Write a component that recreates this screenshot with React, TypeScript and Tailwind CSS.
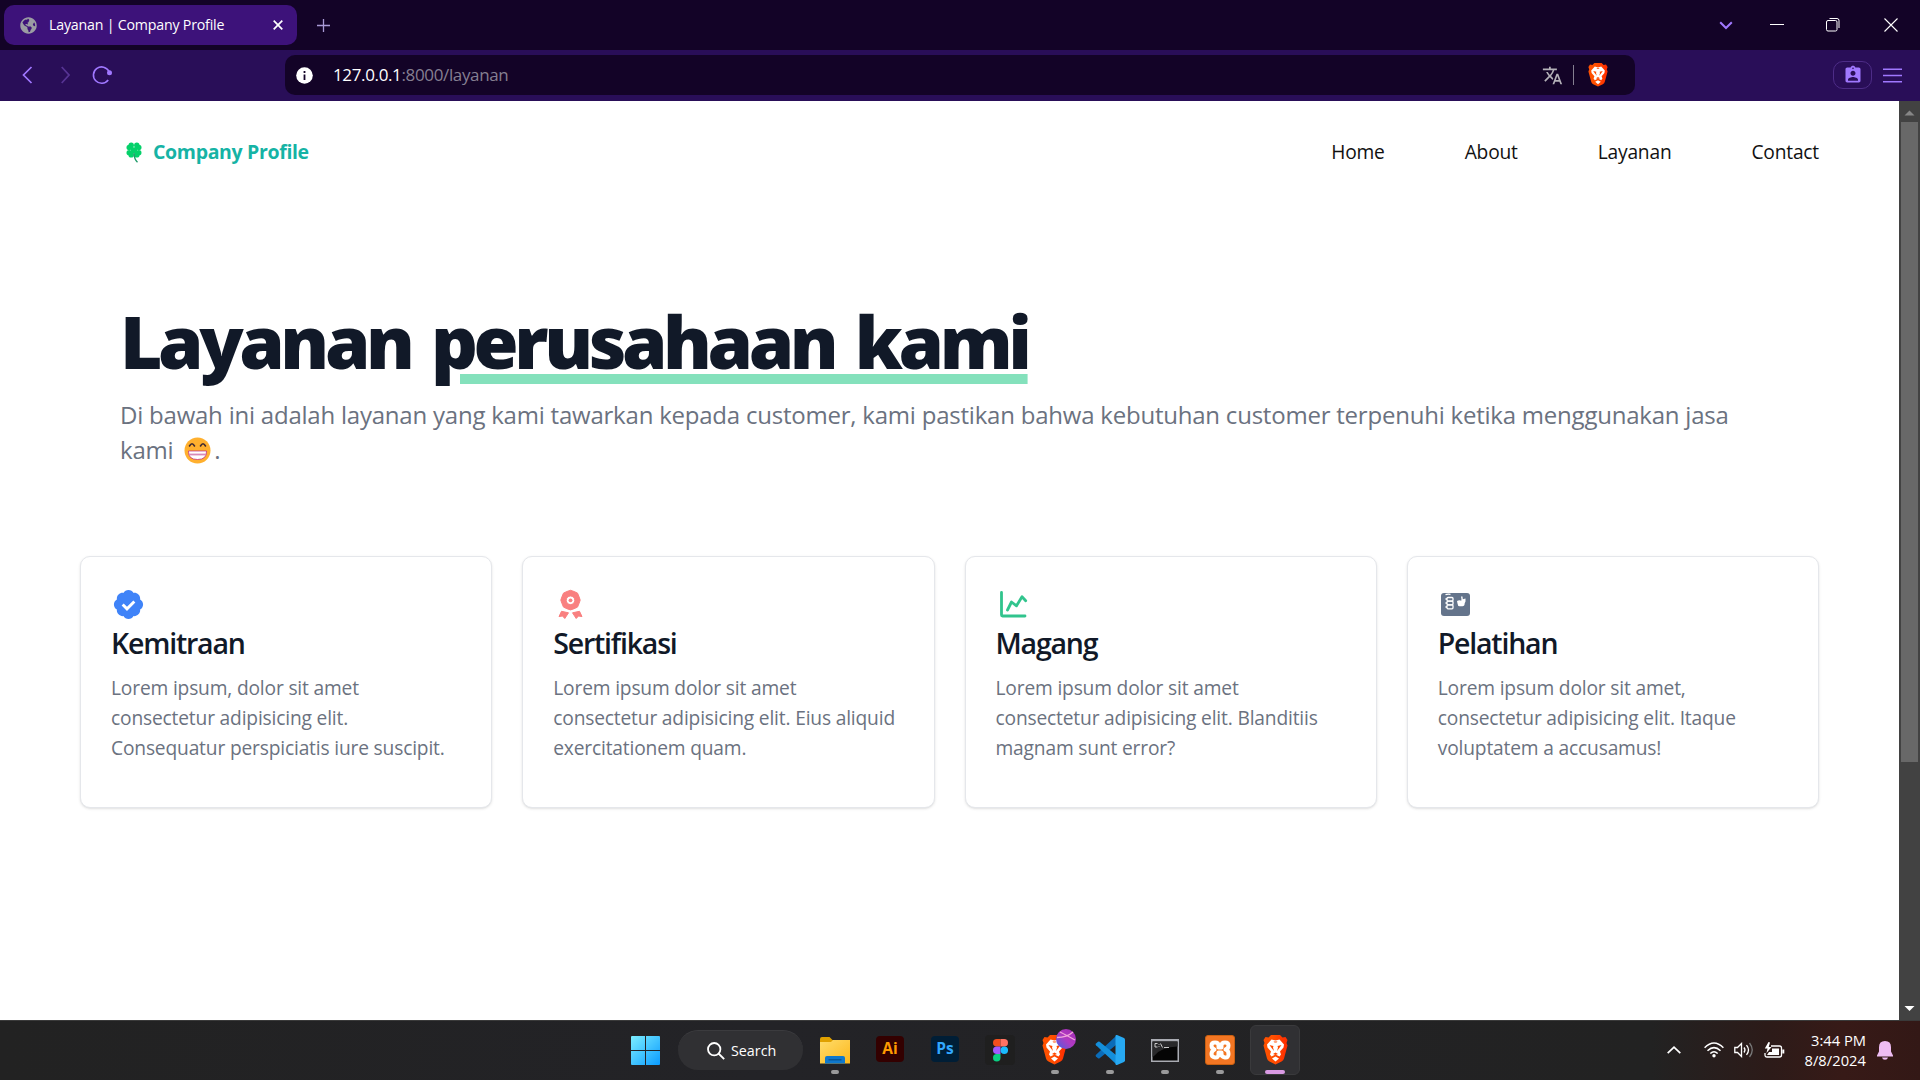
import React from 'react';
import { MdTranslate, MdAssignmentInd } from 'react-icons/md';
import { BiSolidBadgeCheck } from 'react-icons/bi';
import { FaGlobeAmericas } from 'react-icons/fa';

function BraveIcon({ w, id }: { w: number; id: string }) {
  return (
    <svg width={w} height={w * 1.18} viewBox="0 0 50 59">
      <defs>
        <linearGradient id={id} x1="0" x2="1" y1="0" y2="0">
          <stop offset="0.4" stopColor="#ff5000" />
          <stop offset="1" stopColor="#ff2a00" />
        </linearGradient>
      </defs>
      <path fill={`url(#${id})`} d="M16 0h18l5 5 6-1 4 6-2 6 2 5-7 26q-1 4-5 6L25 59 13 53q-4-2-5-6L1 21l2-5-2-6 4-6 6 1z" />
      <path fill="#fff" d="M25 11l8-2 9 10-1 6-7 8 2 6-3 4-8-4-8 4-3-4 2-6-7-8-1-6 9-10z M25 43l7 4-7 6-7-6z" />
      <path fill="#ff4a00" d="M13 20l8 2-1 3 2 7-4-5zM37 20l-8 2 1 3-2 7 4-5zM21 13h8l-2 2h-4zM20 38l5-3 5 3-5 2z" />
    </svg>
  );
}

function Clover() {
  return (
    <svg width="16" height="21" viewBox="0 0 16 21">
      <g fill="#05d16a">
        <circle cx="5.200" cy="3.200" r="2.700" /><circle cx="10.800" cy="3.200" r="2.700" />
        <circle cx="3.200" cy="5.400" r="2.700" /><circle cx="12.800" cy="5.400" r="2.700" />
        <circle cx="3.200" cy="10.800" r="2.700" /><circle cx="12.800" cy="10.800" r="2.700" />
        <circle cx="5.200" cy="12.900" r="2.700" /><circle cx="10.800" cy="12.900" r="2.700" />
        <path d="M3.500 3.500l4.500 2 4.500-2L11 8l1.500 4.800L8 11l-4.500 1.800L5 8z" />
      </g>
      <path d="M8 11q0 6 3.500 9.300" fill="none" stroke="#1c9a68" strokeWidth="1.300" />
    </svg>
  );
}

function AwardIcon() {
  return (
    <svg width="35" height="35" viewBox="0 0 35 35" fill="#f98080">
      <path fillRule="evenodd" stroke="#f98080" strokeLinejoin="round" d="M17.500 3.300l3.600 1.200 3.400 1.600 1.500 3.500 1.200 3.500-1.200 3.500-1.500 3.500-3.400 1.600-3.600 1.200-3.600-1.200-3.400-1.600-1.500-3.500-1.200-3.500 1.200-3.500 1.500-3.500 3.400-1.600zM17.500 9a4.300 4.300 0 1 0 0 8.600 4.300 4.300 0 0 0 0-8.600z" />
      <circle cx="17.500" cy="13.300" r="1.900" />
      <path stroke="#f98080" strokeLinejoin="round" d="M8.500 24.300l7 1.500-3.700 5.700-2.300-2.500-3.500.6zM26.500 24.300l-7 1.500 3.700 5.700 2.300-2.500 3.500.6z" />
    </svg>
  );
}

function ChartIcon() {
  return (
    <svg width="35" height="35" viewBox="0 0 35 35" fill="none" stroke="#31c48d" strokeWidth="2.800" strokeLinecap="round" strokeLinejoin="round">
      <path d="M5.500 5.500v22.500q0 1 1 1h22.500" />
      <path d="M11.500 23l4-8 5 3.800 5.500-9 3.700 4" />
    </svg>
  );
}

function NotesIcon() {
  return (
    <svg width="35" height="35" viewBox="0 0 35 35">
      <rect x="3" y="6" width="29" height="23" rx="3" fill="#64748b" />
      <g fill="none" stroke="#fff" strokeWidth="1.300">
        <path d="M7.500 7.700q2-1 5-.4" />
        <rect x="9" y="10.500" width="6" height="3.600" rx="1" />
        <rect x="9" y="14.100" width="6" height="3.700" rx="1" />
        <rect x="9" y="17.800" width="6" height="4" rx="1" />
        <path d="M8.200 11v2M8.200 15v2M8.200 19v2" />
      </g>
      <path fill="#fff" d="M19 14q2.500-1.600 4.300-.2.500-1-.3-4.300h1.500l.3 2.700 2.700-.7v3l-.8 1.700q0 3-2.300 3h-2.700q-2 0-2.200-2.700z" />
    </svg>
  );
}

function Grin() {
  return (
    <svg width="27" height="27" viewBox="0 0 27 27" className="mr-[3px] ml-[5px] inline-block align-[-5px]" role="img" aria-label="grin">
      <circle cx="13.500" cy="13.500" r="13" fill="#ffb02e" />
      <path d="M5.500 9q2.500-4.500 5 0M16.500 9q2.500-4.500 5 0" fill="none" stroke="#402a32" strokeWidth="1.600" strokeLinecap="round" />
      <path d="M4.500 14h18q.5 8.500-9 8.500T4.500 14z" fill="#fff" stroke="#bb1d80" strokeWidth=".7" />
      <path d="M5 17.500h17" stroke="#d889b8" strokeWidth="1.800" />
    </svg>
  );
}

const cards = [
  { title: 'Kemitraan', lines: ['Lorem ipsum, dolor sit amet', 'consectetur adipisicing elit.', 'Consequatur perspiciatis iure suscipit.'], icon: <BiSolidBadgeCheck size={35} color="#3f83f8" /> },
  { title: 'Sertifikasi', lines: ['Lorem ipsum dolor sit amet', 'consectetur adipisicing elit. Eius aliquid', 'exercitationem quam.'], icon: <AwardIcon /> },
  { title: 'Magang', lines: ['Lorem ipsum dolor sit amet', 'consectetur adipisicing elit. Blanditiis', 'magnam sunt error?'], icon: <ChartIcon /> },
  { title: 'Pelatihan', lines: ['Lorem ipsum dolor sit amet,', 'consectetur adipisicing elit. Itaque', 'voluptatem a accusamus!'], icon: <NotesIcon /> },
];

function BrowserChrome() {
  return (
    <header className="text-white">
      <div className="flex h-[50px] items-center bg-[#130327]">
        <div className="ml-1 flex h-10 w-[293px] items-center rounded-[10px] bg-[#3d127a] pr-[14px] pl-4">
          <FaGlobeAmericas size={17} color="#9b9da3" />
          <span className="ml-3 text-[14.200px] tracking-[-0.200px] whitespace-nowrap">Layanan | Company Profile</span>
          <svg className="ml-auto" width="10" height="10" viewBox="0 0 10 10" stroke="#fff" strokeWidth="1.700"><path d="M.7.7l8.600 8.600M9.300.7L.7 9.300" /></svg>
        </div>
        <svg className="ml-5" width="13" height="13" viewBox="0 0 13 13" stroke="#a99ad6" strokeWidth="1.300"><path d="M6.500 0v13M0 6.500h13" /></svg>
        <div className="ml-auto flex items-center">
          <svg width="14" height="9" viewBox="0 0 14 9" fill="none" stroke="#a078ff" strokeWidth="2"><path d="M1.200 1.200L7 7l5.800-5.800" /></svg>
          <svg className="ml-[37px]" width="14" height="2" viewBox="0 0 14 2"><path d="M0 .5h14" stroke="#fff" /></svg>
          <svg className="ml-[42px]" width="14" height="14" viewBox="0 0 14 14" fill="none" stroke="#fff"><rect x=".5" y="2.500" width="10.500" height="10.500" rx="1.500" /><path d="M3.500.5h7.500q2 0 2 2v7.500" /></svg>
          <svg className="mr-[22px] ml-[44px]" width="14" height="14" viewBox="0 0 14 14" stroke="#fff" strokeWidth="1.100"><path d="M.5.5l13 13M13.500.5l-13 13" /></svg>
        </div>
      </div>
      <div className="flex h-[51px] items-center bg-[#290e58] pb-px">
        <svg className="ml-[22px]" width="11" height="18" viewBox="0 0 11 18" fill="none" stroke="#a078ff" strokeWidth="1.700"><path d="M9.500 1L1.500 9l8 8" /></svg>
        <svg className="ml-[28px]" width="9" height="18" viewBox="0 0 9 18" fill="none" stroke="#573494" strokeWidth="1.700"><path d="M.7 1L8 9 .7 17" /></svg>
        <svg className="ml-[22px]" width="20" height="20" viewBox="0 0 20 20"><path d="M17 6.500A8.200 8.200 0 1 0 16.200 15" fill="none" stroke="#a078ff" strokeWidth="1.600" /><circle cx="17.500" cy="7.800" r="2.500" fill="#a078ff" /></svg>
        <div className="ml-[173px] flex h-10 w-[1350px] items-center rounded-[10px] bg-[#130327] pr-[27px] pl-[11px]">
          <svg width="17" height="17" viewBox="0 0 17 17"><circle cx="8.500" cy="8.500" r="8.300" fill="#fff" /><path d="M8.500 4v2M8.500 7.500v5.500" stroke="#130327" strokeWidth="1.800" /></svg>
          <span className="ml-5 text-[17px] tracking-[-0.360px] text-[#857f91]"><span className="text-white">127.0.0.1</span>:8000/layanan</span>
          <MdTranslate className="ml-auto" size={21} color="#b4b1b8" />
          <div className="mx-[10px] h-5 w-px bg-[#857f91]" />
          <div className="ml-[4px]"><BraveIcon w={20} id="bar-brave" /></div>
        </div>
        <div className="ml-auto flex h-7 w-[39px] items-center justify-center rounded-[10px] border border-[#4d2c87]"><MdAssignmentInd size={20} color="#a078ff" /></div>
        <svg className="mr-[18px] ml-[11px]" width="19" height="15" viewBox="0 0 19 15" stroke="#a078ff" strokeWidth="1.400"><path d="M0 1.200h19M0 7.500h19M0 13.800h19" /></svg>
      </div>
    </header>
  );
}

function Page() {
  return (
    <main className="flex-1 overflow-hidden bg-white pr-[80px] pl-20">
      <nav className="flex h-[102px] items-center pl-[46px]">
        <div className="flex items-center">
          <Clover />
          <span className="ml-[11px] text-[19.500px] font-bold tracking-[-0.340px] text-[#16b3a5]">Company Profile</span>
        </div>
        <div className="ml-auto flex gap-20 text-[19.200px] tracking-[-0.200px] text-[#111]">
          <span>Home</span><span>About</span><span>Layanan</span><span>Contact</span>
        </div>
      </nav>
      <section className="mt-[100px] pl-10">
        <h1 className="text-[73px] leading-[75px] font-extrabold tracking-[-4.400px] [word-spacing:6px] whitespace-nowrap text-[#111928]">
          Layanan <span className="underline decoration-[#84e1bc] decoration-[10px] underline-offset-[5px]">perusahaan kami</span>
        </h1>
        <p className="mt-[19px] text-[24px] leading-[35px] tracking-[-0.220px] text-[#6b7280]">
          <span className="whitespace-nowrap">Di bawah ini adalah layanan yang kami tawarkan kepada customer, kami pastikan bahwa kebutuhan customer terpenuhi ketika menggunakan jasa</span><br />
          <span>kami <Grin />.</span>
        </p>
      </section>
      <section className="mt-[89px] grid grid-cols-4 gap-[30px]">
        {cards.map((c) => (
          <article key={c.title} className="h-[252px] rounded-[10px] border border-gray-200 bg-white p-[30px] shadow-sm">
            {c.icon}
            <h5 className="mt-px text-[28.500px] leading-10 font-semibold tracking-[-1.200px] text-[#111928]">{c.title}</h5>
            <p className="mt-[10px] text-[19.200px] leading-[30px] tracking-[-0.170px] whitespace-nowrap text-[#6b7280]">
              {c.lines.map((l) => <span key={l} className="block">{l}</span>)}
            </p>
          </article>
        ))}
      </section>
    </main>
  );
}

function Scrollbar() {
  return (
    <aside className="flex w-[21px] flex-col items-center bg-[#424242]">
      <svg width="21" height="21" viewBox="0 0 21 21"><path d="M5.500 14.500l5-5 5 5z" fill="#868686" /></svg>
      <div className="h-[640px] w-[17px] bg-[#686868]" />
      <svg className="mt-auto" width="21" height="21" viewBox="0 0 21 21"><path d="M5.500 7l5 5 5-5z" fill="#fff" /></svg>
    </aside>
  );
}

function AppTile({ children, running, active }: { children: React.ReactNode; running?: boolean; active?: boolean }) {
  return (
    <div className={active ? 'relative mx-[2.500px] flex h-[50px] w-[50px] items-center justify-center rounded-md border border-[#3a3a3c] bg-[#303033]' : 'relative flex h-[50px] w-[55px] items-center justify-center'}>
      {children}
      {running && <i className="absolute bottom-[1px] h-1 w-2 rounded-full bg-[#9a9a9b]" />}
      {active && <i className="absolute bottom-0 h-1 w-5 rounded-full bg-[#d99ae3]" />}
    </div>
  );
}

function Taskbar() {
  return (
    <footer className="flex h-[60px] items-center border-t border-[#3a3a3a] bg-[linear-gradient(90deg,#222_0%,#232327_40%,#222_86%,#2c1b19_92%,#371a17_96%,#331816_100%)] pb-px text-white">
      <div className="ml-[617.500px] flex items-center">
        <AppTile>
          <svg width="29" height="29" viewBox="0 0 29 29">
            <defs><linearGradient id="win" gradientUnits="userSpaceOnUse" x1="0" y1="0" x2="29" y2="29"><stop stopColor="#7ceeff" /><stop offset="1" stopColor="#0a9bff" /></linearGradient></defs>
            <path fill="url(#win)" d="M1 0h13v14H0V1q0-1 1-1zM15 0h13q1 0 1 1v13H15zM0 15h14v14H1q-1 0-1-1zM15 15h14v13q0 1-1 1H15z" />
          </svg>
        </AppTile>
        <div className="mr-[4.500px] ml-[5.500px] flex h-10 w-[125px] items-center rounded-full border-t border-[#3b3b3e] bg-[#303033] pl-[29px]">
          <svg width="18" height="18" viewBox="0 0 18 18" fill="none" stroke="#fff" strokeWidth="1.800"><circle cx="7.200" cy="7.200" r="6.200" /><path d="M11.500 11.500l5.700 5.700" /></svg>
          <span className="ml-[6px] text-[14.300px]">Search</span>
        </div>
        <AppTile running>
          <svg width="30" height="27" viewBox="0 0 30 27">
            <defs><linearGradient id="folder" x1="0" y1="0" x2="1" y2="1"><stop stopColor="#ffdc6b" /><stop offset="1" stopColor="#fcb81c" /></linearGradient></defs>
            <path fill="#e0a100" d="M0 2q0-2 2-2h7.500l3 3H17v5H0z" />
            <path fill="url(#folder)" d="M0 5h11l2-2h17v23.500H0z" />
            <path fill="#0f78cc" d="M5 26.500V21q0-2 2-2h16q2 0 2 2v5.500z" />
            <path d="M8.500 22.800h13" stroke="#07508f" strokeWidth="1.200" />
          </svg>
        </AppTile>
        <AppTile><div className="mb-[3px] flex h-[26px] w-7 items-center justify-center rounded-[4px] bg-[#330000] text-[15.500px] leading-none font-bold text-[#ff9a00]">Ai</div></AppTile>
        <AppTile><div className="mb-[3px] flex h-[26px] w-7 items-center justify-center rounded-[4px] bg-[#001e36] text-[15.500px] leading-none font-bold text-[#31a8ff]">Ps</div></AppTile>
        <AppTile>
          <div className="flex size-[30px] items-center justify-center rounded-[4px] bg-[#1f1f1f]">
            <svg width="15" height="23" viewBox="0 0 15 23">
              <path fill="#f24e1e" d="M7.500 0v7.500H3.750a3.750 3.750 0 0 1 0-7.500z" /><path fill="#ff7262" d="M7.500 0h3.750a3.750 3.750 0 0 1 0 7.500H7.500z" />
              <path fill="#a259ff" d="M7.500 7.500V15H3.750a3.750 3.750 0 0 1 0-7.500z" /><circle cx="11.300" cy="11.250" r="3.750" fill="#1abcfe" />
              <path fill="#0acf83" d="M3.750 15H7.500v3.750A3.750 3.750 0 1 1 3.750 15z" />
            </svg>
          </div>
        </AppTile>
        <AppTile running>
          <div className="mr-[2px]"><BraveIcon w={25} id="beta-brave" /></div>
          <svg className="absolute top-[4px] left-[28px]" width="20" height="20" viewBox="0 0 20 20">
            <defs><linearGradient id="ball" x1="1" y1="0" x2="0" y2="1"><stop stopColor="#a02bb5" /><stop offset=".5" stopColor="#b13ac1" /><stop offset="1" stopColor="#4560e0" /></linearGradient></defs>
            <circle cx="10" cy="10" r="10" fill="url(#ball)" /><path d="M1 8.500q10 0 16-5.500M4 3q6 3 15 8" fill="none" stroke="#f2a6dc" strokeWidth="1.300" />
          </svg>
        </AppTile>
        <AppTile running>
          <svg width="30" height="30" viewBox="0 0 30 30">
            <path fill="#0b6cb8" d="M1 19.700L21 1v9L4.600 23.200q-.8.600-1.600 0l-2-1.700q-.9-.900 0-1.800z" />
            <path fill="#148fdb" d="M1 10.300L21 29v-9L4.600 6.800q-.8-.600-1.600 0L1 8.500q-.9.900 0 1.800z" />
            <path fill="#27a9f2" d="M22 0l7 3q1 .5 1 1.700v20.600q0 1.200-1 1.700l-7 3q-1.500.5-1.500-1.500v-27Q20.500-.5 22 0z" />
          </svg>
        </AppTile>
        <AppTile running>
          <svg width="28" height="23" viewBox="0 0 28 23">
            <rect width="28" height="23" fill="#aaacb3" /><rect x="1.500" y="2.500" width="25" height="19" fill="#050505" />
            <path d="M1.500 2.500h25v5Q10 8 3 17L1.500 18z" fill="#29292b" />
            <path d="M6.500 4.500H4v3.500h2.500M8 5v.8M8 7v.8M9.500 4.500l2 4M13 8.500h5" fill="none" stroke="#dcdcdc" strokeWidth=".9" />
          </svg>
        </AppTile>
        <AppTile running>
          <div className="flex size-[30px] items-center justify-center rounded-[3px] border border-[#c96011] bg-[#f37623]">
            <svg width="22" height="20" viewBox="0 0 22 20" fill="none" stroke="#fff" strokeWidth="4" strokeLinecap="round" strokeLinejoin="round">
              <path d="M9.500 7.500V5.500q0-3-3.500-3t-3.500 3T5.500 9.500q-3 1.500-3 4.500t3.500 3.500 3.500-3.500v-1.500h3V14q0 3 3.500 3.500t3.500-3.500-3-4.500q3-1 3-4t-3.500-3-3.500 3v2z" />
            </svg>
          </div>
        </AppTile>
        <AppTile active><BraveIcon w={25} id="active-brave" /></AppTile>
      </div>
      <div className="ml-auto flex items-center">
        <svg width="14" height="8" viewBox="0 0 14 8" fill="none" stroke="#fff" strokeWidth="1.700"><path d="M.7 7.200L7 1.200l6.300 6" /></svg>
        <svg className="ml-[23px]" width="20" height="16" viewBox="0 0 20 16" fill="none" stroke="#fff" strokeWidth="1.500"><path d="M.6 5.800q9.400-9.500 18.800 0M3.500 8.800q6.500-6.300 13 0M6.300 11.500q3.700-3.500 7.400 0" /><circle cx="10" cy="13.800" r="1.700" fill="#fff" stroke="none" /></svg>
        <svg className="ml-[10px]" width="20" height="16" viewBox="0 0 20 16" fill="none" stroke="#fff" strokeWidth="1.300"><path d="M.8 5.500h2.700L7.500 1.500v13l-4-4H.8z" /><path d="M10 5.500q2 2.500 0 5M12.500 3.200q4 4.800 0 9.600" /><path d="M15.500 1q5.500 7 0 14" stroke="#777" /></svg>
        <svg className="ml-[10px]" width="21" height="17" viewBox="0 0 21 17" fill="none" stroke="#fff" strokeWidth="1.300"><path d="M7 4h8.500q2 0 2 2v7q0 2-2 2H3q-2 0-2-2v-2" /><path d="M8 6.500h7v6.500H3l2-3h3z" fill="#fff" stroke="none" /><path d="M4.500 0L.8 6.500h2.700L2.500 11l5-6H4.700L6 .5z" fill="#fff" stroke="none" /><path d="M19.300 7.500v4" strokeWidth="2" /></svg>
        <div className="ml-[19px] w-[62px] pb-px text-right text-[14.700px] leading-[20px] whitespace-nowrap"><div className="-ml-2">3:44 PM</div><div className="-ml-2 tracking-[0.050px]">8/8/2024</div></div>
        <svg className="mr-[27px] ml-[11px]" width="16" height="19" viewBox="0 0 16 19" fill="#efbdf3"><path d="M8 0q6 0 6 6.200v4.300l2 4v1H0v-1l2-4V6.200Q2 0 8 0zM5 16.500h6q-.5 2.300-3 2.300T5 16.500z" /></svg>
      </div>
    </footer>
  );
}

export default function App() {
  return (
    <div className="flex h-[1080px] w-[1920px] flex-col overflow-hidden font-['Open_Sans',sans-serif]">
      <BrowserChrome />
      <div className="flex min-h-0 flex-1">
        <Page />
        <Scrollbar />
      </div>
      <Taskbar />
    </div>
  );
}
